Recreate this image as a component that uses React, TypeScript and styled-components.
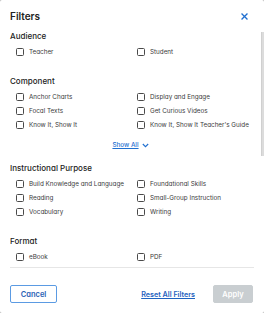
import React from "react";
import styled, { createGlobalStyle } from "styled-components";

const Global = createGlobalStyle`
  html, body { margin: 0; padding: 0; background: #b4b4b4; }
  body { font-family: Inter, "Noto Sans", sans-serif; font-feature-settings: "cv11" 1; }
  * { box-sizing: border-box; }
`;

const Dialog = styled.div`
  width: 264px;
  height: 313px;
  background: #fff;
  border-radius: 2px;
  display: flex;
  flex-direction: column;
  overflow: hidden;
`;

const Header = styled.div`
  height: 31px;
  flex: none;
  display: flex;
  align-items: center;
  justify-content: space-between;
  padding: 0 16px 0 10px;
`;

const Title = styled.h1`
  margin: 0;
  font-size: 10px;
  line-height: 12px;
  font-weight: 600;
  color: #222;
`;

const CloseButton = styled.button`
  border: 0;
  background: none;
  padding: 0;
  width: 7px;
  height: 7px;
  display: flex;
  margin-top: 1px;
  cursor: pointer;
`;

const ScrollArea = styled.div`
  position: relative;
  flex: 1;
  min-height: 0;
`;

const Scroll = styled.div`
  height: 100%;
  overflow-y: auto;
  padding: 0 6px 11px 10px;
  scrollbar-width: none;
  &::-webkit-scrollbar { display: none; }
`;

const ScrollThumb = styled.div`
  position: absolute;
  top: 1px;
  right: 0;
  width: 3.5px;
  height: 124px;
  background: #dcdcdc;
  border-left: 1px solid #d0d0d0;
  pointer-events: none;
`;

const Section = styled.section<{ $tight?: boolean }>`
  margin-bottom: ${(p) => (p.$tight ? 14 : 20)}px;
  &:last-child { margin-bottom: 0; }
`;

const SectionTitle = styled.h2`
  margin: 0 0 7px;
  font-size: 8px;
  line-height: 10px;
  font-weight: 500;
  color: #222;
`;

const Grid = styled.div`
  display: grid;
  grid-template-columns: 1fr 1fr;
  row-gap: 6px;
  padding-left: 6px;
`;

const Option = styled.label`
  display: flex;
  align-items: center;
  gap: 5px;
  height: 8px;
  font-size: 6.3px;
  line-height: 8px;
  color: #3a3a3a;
  white-space: nowrap;
`;

const Box = styled.span`
  width: 8px;
  height: 8px;
  flex: none;
  border: 1px solid #4a4a4a;
  border-radius: 1.5px;
  background: #fff;
`;

const ShowAllRow = styled.div`
  margin-top: 12px;
  display: flex;
  justify-content: center;
  padding-right: 7px;
`;

const ShowAll = styled.a`
  display: flex;
  align-items: center;
  gap: 3px;
  font-size: 6.3px;
  line-height: 8px;
  font-weight: 500;
  color: #1f6fd0;
  text-decoration: underline;
  cursor: pointer;
`;

const Divider = styled.div`
  flex: none;
  height: 1px;
  margin: 0 10px;
  background: #e6e6e6;
`;

const Footer = styled.div`
  flex: none;
  display: flex;
  align-items: center;
  justify-content: space-between;
  padding: 17px 11px 10px 10px;
`;

const Right = styled.div`
  display: flex;
  align-items: center;
  gap: 18px;
`;

const Button = styled.button<{ $variant: "outline" | "disabled" }>`
  height: 18px;
  width: ${(p) => (p.$variant === "outline" ? 47 : 40)}px;
  padding: 0;
  border-radius: 2px;
  font-family: inherit;
  font-feature-settings: "cv11" 1;
  font-size: 7.5px;
  font-weight: 600;
  border: 1px solid ${(p) => (p.$variant === "outline" ? "#5b9be3" : "#c9ced1")};
  background: ${(p) => (p.$variant === "outline" ? "#fff" : "#c9ced1")};
  color: ${(p) => (p.$variant === "outline" ? "#2b62b5" : "#fff")};
`;

const ResetLink = styled.a`
  font-size: 7.2px;
  font-weight: 600;
  color: #1f63c0;
  text-decoration: underline;
  cursor: pointer;
`;

type SectionData = { title: string; options: string[]; showAll?: boolean };

const sections: SectionData[] = [
  { title: "Audience", options: ["Teacher", "Student"] },
  {
    title: "Component",
    options: [
      "Anchor Charts",
      "Display and Engage",
      "Focal Texts",
      "Get Curious Videos",
      "Know It, Show It",
      "Know It, Show It Teacher's Guide",
    ],
    showAll: true,
  },
  {
    title: "Instructional Purpose",
    options: [
      "Build Knowledge and Language",
      "Foundational Skills",
      "Reading",
      "Small-Group Instruction",
      "Vocabulary",
      "Writing",
    ],
  },
  { title: "Format", options: ["eBook", "PDF"] },
];

const CloseIcon = () => (
  <svg width="7" height="7" viewBox="0 0 7 7">
    <path d="M1 1 L6 6 M6 1 L1 6" stroke="#1f6fd0" strokeWidth="1.3" strokeLinecap="square" />
  </svg>
);

const Chevron = () => (
  <svg width="7" height="5" viewBox="0 0 7 5">
    <path d="M0.8 1 L3.5 3.7 L6.2 1" stroke="#1f6fd0" strokeWidth="1.1" fill="none" />
  </svg>
);

export default function App() {
  return (
    <>
      <Global />
      <Dialog>
        <Header>
          <Title>Filters</Title>
          <CloseButton aria-label="Close">
            <CloseIcon />
          </CloseButton>
        </Header>
        <ScrollArea>
          <Scroll>
            {sections.map((s) => (
              <Section key={s.title} $tight={s.showAll}>
                <SectionTitle>{s.title}</SectionTitle>
                <Grid>
                  {s.options.map((o) => (
                    <Option key={o}>
                      <Box />
                      {o}
                    </Option>
                  ))}
                </Grid>
                {s.showAll && (
                  <ShowAllRow>
                    <ShowAll>
                      Show All
                      <Chevron />
                    </ShowAll>
                  </ShowAllRow>
                )}
              </Section>
            ))}
          </Scroll>
          <ScrollThumb />
        </ScrollArea>
        <Divider />
        <Footer>
          <Button $variant="outline">Cancel</Button>
          <Right>
            <ResetLink>Reset All Filters</ResetLink>
            <Button $variant="disabled" disabled>
              Apply
            </Button>
          </Right>
        </Footer>
      </Dialog>
    </>
  );
}
